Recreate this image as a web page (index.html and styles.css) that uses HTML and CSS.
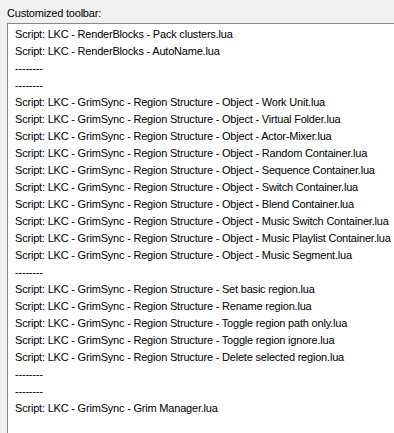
FILE: index.html
```html
<!DOCTYPE html>
<html lang="en">
<head>
    <meta charset="UTF-8">
    <title>Customized toolbar</title>
    <link rel="stylesheet" href="styles.css">
</head>
<body>
    <div class="panel">
        <label class="caption">Customized toolbar:</label>
        <ul class="listbox">
            <li>Script: LKC - RenderBlocks - Pack clusters.lua</li>
            <li>Script: LKC - RenderBlocks - AutoName.lua</li>
            <li>--------</li>
            <li>--------</li>
            <li>Script: LKC - GrimSync - Region Structure - Object - Work Unit.lua</li>
            <li>Script: LKC - GrimSync - Region Structure - Object - Virtual Folder.lua</li>
            <li>Script: LKC - GrimSync - Region Structure - Object - Actor-Mixer.lua</li>
            <li>Script: LKC - GrimSync - Region Structure - Object - Random Container.lua</li>
            <li>Script: LKC - GrimSync - Region Structure - Object - Sequence Container.lua</li>
            <li>Script: LKC - GrimSync - Region Structure - Object - Switch Container.lua</li>
            <li>Script: LKC - GrimSync - Region Structure - Object - Blend Container.lua</li>
            <li>Script: LKC - GrimSync - Region Structure - Object - Music Switch Container.lua</li>
            <li>Script: LKC - GrimSync - Region Structure - Object - Music Playlist Container.lua</li>
            <li>Script: LKC - GrimSync - Region Structure - Object - Music Segment.lua</li>
            <li>--------</li>
            <li>Script: LKC - GrimSync - Region Structure - Set basic region.lua</li>
            <li>Script: LKC - GrimSync - Region Structure - Rename region.lua</li>
            <li>Script: LKC - GrimSync - Region Structure - Toggle region path only.lua</li>
            <li>Script: LKC - GrimSync - Region Structure - Toggle region ignore.lua</li>
            <li>Script: LKC - GrimSync - Region Structure - Delete selected region.lua</li>
            <li>--------</li>
            <li>--------</li>
            <li>Script: LKC - GrimSync - Grim Manager.lua</li>
        </ul>
    </div>
</body>
</html>
```

FILE: styles.css
```css
body {
    margin: 0;
    background-color: #f0f0f0;
    font-family: 'Liberation Sans', Arial, sans-serif;
    font-size: 11px;
    letter-spacing: -0.2px;
    color: #000;
    overflow: hidden;
}

.panel {
    padding: 7px 0 0 7px;
}

.caption {
    display: block;
    height: 16px;
    line-height: 13px;
}

.listbox {
    list-style: none;
    margin: 0;
    padding: 2px 0 20px 7px;
    background-color: #fff;
    border-top: 1px solid #828790;
    border-left: 1px solid #828790;
}

.listbox li {
    height: 17px;
    line-height: 17px;
    white-space: nowrap;
}
```
